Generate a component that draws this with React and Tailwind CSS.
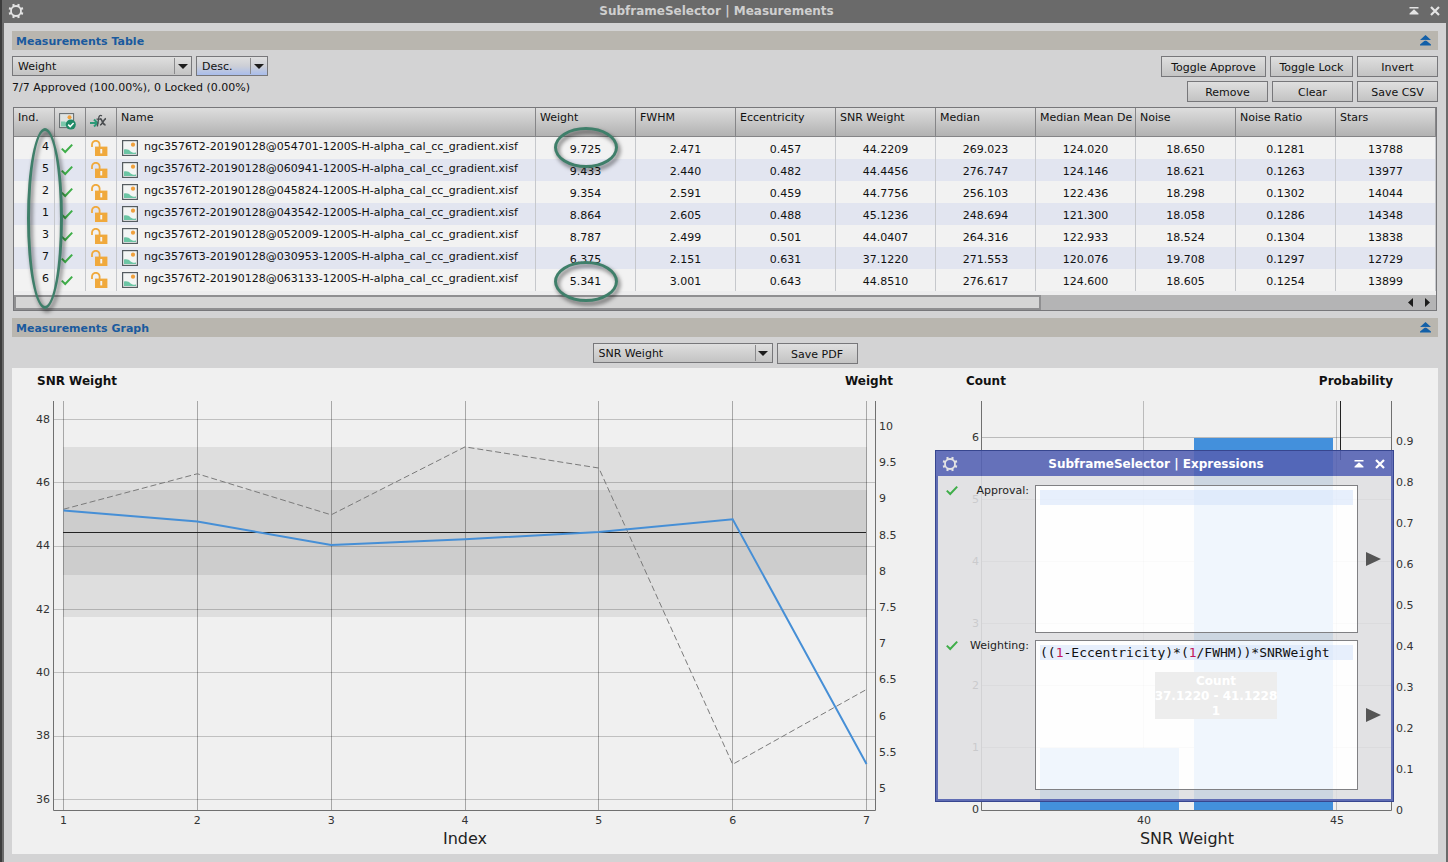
import React, { useState } from 'react';

const MEASUREMENTS = [
  { index: 4, file: 'ngc3576T2-20190128@054701-1200S-H-alpha_cal_cc_gradient.xisf', values: ['9.725', '2.471', '0.457', '44.2209', '269.023', '124.020', '18.650', '0.1281', '13788'] },
  { index: 5, file: 'ngc3576T2-20190128@060941-1200S-H-alpha_cal_cc_gradient.xisf', values: ['9.433', '2.440', '0.482', '44.4456', '276.747', '124.146', '18.621', '0.1263', '13977'] },
  { index: 2, file: 'ngc3576T2-20190128@045824-1200S-H-alpha_cal_cc_gradient.xisf', values: ['9.354', '2.591', '0.459', '44.7756', '256.103', '122.436', '18.298', '0.1302', '14044'] },
  { index: 1, file: 'ngc3576T2-20190128@043542-1200S-H-alpha_cal_cc_gradient.xisf', values: ['8.864', '2.605', '0.488', '45.1236', '248.694', '121.300', '18.058', '0.1286', '14348'] },
  { index: 3, file: 'ngc3576T2-20190128@052009-1200S-H-alpha_cal_cc_gradient.xisf', values: ['8.787', '2.499', '0.501', '44.0407', '264.316', '122.933', '18.524', '0.1304', '13838'] },
  { index: 7, file: 'ngc3576T3-20190128@030953-1200S-H-alpha_cal_cc_gradient.xisf', values: ['6.375', '2.151', '0.631', '37.1220', '271.553', '120.076', '19.708', '0.1297', '12729'] },
  { index: 6, file: 'ngc3576T2-20190128@063133-1200S-H-alpha_cal_cc_gradient.xisf', values: ['5.341', '3.001', '0.643', '44.8510', '276.617', '124.600', '18.605', '0.1254', '13899'] },
];

const VALUE_COLUMNS = [
  'Weight',
  'FWHM',
  'Eccentricity',
  'SNR Weight',
  'Median',
  'Median Mean De',
  'Noise',
  'Noise Ratio',
  'Stars',
];

const GearIcon = () => (
  <svg width="16" height="16" viewBox="0 0 16 16" fill="none" stroke="#e4e4e4" aria-hidden="true">
    <circle cx="8" cy="8" r="5" strokeWidth="1.8" />
    {[22.5, 67.5, 112.5, 157.5, 202.5, 247.5, 292.5, 337.5].map((angle) => (
      <path key={angle} d="M8 2.6V0.5" strokeWidth="2.2" transform={`rotate(${angle} 8 8)`} />
    ))}
  </svg>
);

const ShadeIcon = () => (
  <svg width="10" height="8" viewBox="0 0 10 8" fill="currentColor" aria-hidden="true">
    <path d="M0.5 0h9v1.6h-9zM5 2.2l4.5 4.2v1.2h-9V6.4z" />
  </svg>
);

const CloseIcon = () => (
  <svg width="10" height="10" viewBox="0 0 10 10" stroke="currentColor" strokeWidth="2.2" aria-hidden="true">
    <path d="M1 1l8 8M9 1L1 9" />
  </svg>
);

const CollapseIcon = () => (
  <svg width="11" height="11" viewBox="0 0 11 11" fill="#1360a8" aria-hidden="true">
    <path d="M5.5 0L11 5H0zM5.5 5L11 9.6V10.6H0V9.6z" />
    <path d="M1.5 5.4h8" stroke="#b9b6af" strokeWidth="0.7" />
  </svg>
);

const CheckIcon = () => (
  <svg width="12" height="11" viewBox="0 0 12 11" fill="none" stroke="#3fae49" strokeWidth="2" aria-hidden="true">
    <path d="M0.8 5.6l3.4 3.4L11.2 1.6" />
  </svg>
);

const UnlockIcon = () => (
  <svg width="17" height="17" viewBox="0 0 17 17" aria-hidden="true">
    <path d="M1 7V4.6a3.6 3.6 0 0 1 7.6 0V7" fill="none" stroke="#f0a93c" strokeWidth="1.8" />
    <path d="M4 6.6h12.4V16H4z" fill="#f0a93c" />
    <path d="M9.3 9h1.9v4.4H9.3z" fill="#f4f4f4" />
  </svg>
);

const ImageIcon = () => (
  <svg width="16" height="16" viewBox="0 0 16 16" aria-hidden="true">
    <rect x="0.6" y="0.6" width="14.8" height="14.8" fill="#f3f5f4" stroke="#555c60" strokeWidth="1.2" />
    <path d="M2 14V9.6c3-.8 5 .3 6.6 1.8 1.6 1.2 3.4 1.4 5.4 1.2V14z" fill="#6cc5a4" />
    <circle cx="11" cy="4.7" r="2.1" fill="#f0a03c" />
  </svg>
);

const ApprovedIcon = () => (
  <svg width="17" height="17" viewBox="0 0 17 17" aria-hidden="true">
    <rect x="0.6" y="0.6" width="14" height="14" fill="#dfe3e1" stroke="#62686b" strokeWidth="1" />
    <path d="M2 13.5V8.5h4l2 2v3z" fill="#7cc8ac" />
    <circle cx="10.5" cy="4.2" r="2" fill="#f0a03c" />
    <circle cx="11.8" cy="11.6" r="5" fill="#1f8a66" />
    <path d="M9.2 11.6l2 2 3.4-3.6" fill="none" stroke="#fff" strokeWidth="1.5" />
  </svg>
);

const FormulaIcon = () => (
  <svg width="17" height="15" viewBox="0 0 17 15" fill="none" aria-hidden="true">
    <path d="M0 9h7M4 5.5L7.5 9 4 12.5" stroke="#2c9a78" strokeWidth="2" />
    <path d="M12 1.8C9.8.8 9 2.2 8.7 4L7.4 12.5M6.500 5.2h4.6" stroke="#4a4d50" strokeWidth="1.3" />
    <path d="M10.2 4.6c2 0 2 6.4 5.4 6.4M16 4.6c-2.6.2-3.4 6.2-6 6.4" stroke="#4a4d50" strokeWidth="1.6" />
  </svg>
);

const PlayIcon = () => (
  <svg width="15" height="14" viewBox="0 0 15 14" fill="#555" aria-hidden="true">
    <path d="M0 0l15 7-15 7z" />
  </svg>
);

const SectionBar = ({ title }) => (
  <div className="flex h-[19px] items-center justify-between bg-[#b9b6af] pr-[7px] pl-1">
    <h2 className="pt-0.5 text-[11px] leading-4 font-bold text-[#1a5a9e]">{title}</h2>
    <button type="button" aria-label={`Collapse ${title}`}>
      <CollapseIcon />
    </button>
  </div>
);

const PushButton = ({ children, className }) => (
  <button
    type="button"
    className={`h-[21px] border border-[#77777a] bg-linear-to-b from-[#dfdfdf] to-[#c3c3c3] pt-0.5 text-center leading-4 ${className}`}
  >
    {children}
  </button>
);

const ComboBox = ({ label, options, className, selectClassName }) => {
  const [value, setValue] = useState(options[0]);
  return (
    <div className={`relative h-5 ${className}`}>
      <select
        aria-label={label}
        value={value}
        onChange={(event) => setValue(event.target.value)}
        className={`h-full w-full appearance-none border border-[#77777a] bg-linear-to-b from-[#dfdfdf] pt-0.5 pl-[5px] leading-4 ${selectClassName}`}
      >
        {options.map((option) => (
          <option key={option}>{option}</option>
        ))}
      </select>
      <span className="pointer-events-none absolute inset-y-0.5 right-0.5 flex w-4 items-center justify-center border-l border-[#8a8a8c]">
        <svg width="10" height="5" viewBox="0 0 10 5" fill="#1c1c1c" aria-hidden="true">
          <path d="M0 0h10L5 5z" />
        </svg>
      </span>
    </div>
  );
};

// Oval callout drawn over the table
const Ring = ({ className }) => (
  <div
    className={`pointer-events-none absolute rounded-[50%] border-[3px] border-[#3f7f6a] drop-shadow-[2px_3px_2px_rgba(0,0,0,0.6)] ${className}`}
  />
);

const headCell =
  'h-[29px] overflow-hidden border-r border-b border-[#858587] bg-linear-to-b from-[#dedede] to-[#b2b2b2] pt-[3px] pl-1 text-left align-top font-normal whitespace-nowrap leading-[14px]';
const bodyCell = 'h-[22px] border-r border-[#c6c8cc] p-0 leading-4 whitespace-nowrap';

const MeasurementsTable = () => (
  <div className="relative mx-px mt-[5px] border border-[#77777a] bg-[#ededee]">
    <table className="w-full table-fixed border-separate border-spacing-0">
      <colgroup>
        <col className="w-[41px]" />
        <col className="w-[31px]" />
        <col className="w-[31px]" />
        <col />
        {VALUE_COLUMNS.map((name) => (
          <col key={name} className="w-[100px]" />
        ))}
      </colgroup>
      <thead>
        <tr>
          <th className={headCell}>Ind.</th>
          <th className={headCell} aria-label="Approved">
            <div className="pt-0.5"><ApprovedIcon /></div>
          </th>
          <th className={headCell} aria-label="Locked">
            <div className="pt-[3px]"><FormulaIcon /></div>
          </th>
          <th className={headCell}>Name</th>
          {VALUE_COLUMNS.map((name) => (
            <th key={name} className={headCell}>{name}</th>
          ))}
        </tr>
      </thead>
      <tbody>
        {MEASUREMENTS.map((row) => (
          <tr key={row.index} className="bg-[#f2f2f2] even:bg-[#e2e5f0]">
            <td className={`${bodyCell} pr-[5px] pb-0.5 text-right`}>{row.index}</td>
            <td className={`${bodyCell} pl-1.5`}><CheckIcon /></td>
            <td className={`${bodyCell} pl-[5px]`}><UnlockIcon /></td>
            <td className={`${bodyCell} pl-[5px]`}>
              <div className="flex items-center gap-1.5">
                <ImageIcon />
                <span className="pb-0.5">{row.file}</span>
              </div>
            </td>
            {row.values.map((value, i) => (
              <td key={VALUE_COLUMNS[i]} className={`${bodyCell} pt-1 text-center`}>{value}</td>
            ))}
          </tr>
        ))}
      </tbody>
    </table>
    <div className="mt-1 flex h-[15px] items-center justify-between bg-[#b4b4b5] pr-1.5">
      <div className="h-full w-[72.5%] border-2 border-[#8f8f91] bg-[#d5d5d5]" />
      <div className="flex gap-3">
        <button type="button" aria-label="Scroll left">
          <svg width="5" height="9" viewBox="0 0 5 9" fill="#1c1c1c"><path d="M5 0v9L0 4.5z" /></svg>
        </button>
        <button type="button" aria-label="Scroll right">
          <svg width="5" height="9" viewBox="0 0 5 9" fill="#1c1c1c"><path d="M0 0v9l5-4.5z" /></svg>
        </button>
      </div>
    </div>
    <Ring className="top-5 left-[13px] h-[181px] w-9" />
    <Ring className="top-[19px] right-[818px] h-[41px] w-16" />
    <Ring className="top-[153px] right-[818px] h-[41px] w-16" />
  </div>
);

const GRID = '#000';
const byIndex = [...MEASUREMENTS].sort((a, b) => a.index - b.index);

const indexX = (i) => 51.5 + ((i - 1) * 803) / 6;
const snrY = (v) => 51.5 + ((48 - v) * 380) / 12;
const weightY = (v) => 59 + (10 - v) * 72.4;

const MeasurementsChart = () => {
  const snrLine = byIndex.map((m) => `${indexX(m.index)},${snrY(Number(m.values[3]))}`).join(' ');
  const weightLine = byIndex.map((m) => `${indexX(m.index)},${weightY(Number(m.values[0]))}`).join(' ');

  return (
    <svg viewBox="0 0 924 486" className="block w-full" role="img" aria-label="SNR Weight and Weight by index">
      <rect x="51" y="79" width="804" height="170" fill="#dedede" />
      <rect x="51" y="122" width="804" height="85" fill="#cdcdcd" />
      <g stroke={GRID} strokeOpacity="0.2">
        {[48, 46, 44, 42, 40, 38, 36].map((v) => (
          <path key={v} d={`M42 ${Math.floor(snrY(v)) + 0.5}H863`} />
        ))}
      </g>
      <g stroke={GRID} strokeOpacity="0.3">
        {byIndex.map(({ index }) => (
          <path key={index} d={`M${Math.floor(indexX(index)) + 0.5} 33V442`} />
        ))}
      </g>
      <path d="M41.5 33V442.5H863.5V33" fill="none" stroke="#707070" />
      <path d="M51 164.5H854" stroke="#222" />
      <polyline points={weightLine} fill="none" stroke="#7a7a7a" strokeDasharray="6 3" />
      <polyline points={snrLine} fill="none" stroke="#468fd6" strokeWidth="2" />
      <g fontSize="11" fill="#333">
        {[48, 46, 44, 42, 40, 38, 36].map((v) => (
          <text key={v} x="38" y={snrY(v) + 3} textAnchor="end">{v}</text>
        ))}
        {[10, 9.5, 9, 8.5, 8, 7.5, 7, 6.5, 6, 5.5, 5].map((v) => (
          <text key={v} x="867" y={weightY(v) + 3}>{v}</text>
        ))}
        {byIndex.map(({ index }) => (
          <text key={index} x={indexX(index)} y="456" textAnchor="middle">{index}</text>
        ))}
      </g>
      <g fontSize="12" fontWeight="bold" fill="#111">
        <text x="25" y="17">SNR Weight</text>
        <text x="881" y="17" textAnchor="end">Weight</text>
      </g>
      <text x="453" y="476" fontSize="16" fill="#222" textAnchor="middle">Index</text>
    </svg>
  );
};

const countY = (v) => 442 - v * 62;
const probabilityY = (v) => 442 - v * 410;

const HistogramChart = () => (
  <svg viewBox="0 0 502 486" className="block w-full" role="img" aria-label="SNR Weight histogram">
    <g stroke={GRID} strokeOpacity="0.22">
      {[1, 2, 3, 4, 5, 6].map((v) => (
        <path key={v} d={`M46 ${countY(v) - 0.5}H455`} />
      ))}
      <path d="M207.5 33V442M400.5 33V442" />
    </g>
    <rect x="104" y={countY(1)} width="139" height="62" fill="#4390dc" />
    <rect x="258" y={countY(6)} width="139" height="372" fill="#4390dc" />
    <path d="M404.5 33V92" stroke="#222" />
    <path d="M45.5 33V442.5H455.5V33" fill="none" stroke="#707070" />
    <rect x="219" y="304" width="122" height="47" fill="#1a1a1a" />
    <g fontSize="12" fontWeight="bold" fill="#fff" textAnchor="middle">
      <text x="280" y="317">Count</text>
      <text x="280" y="332">37.1220 - 41.1228</text>
      <text x="280" y="347">1</text>
    </g>
    <g fontSize="11" fill="#333">
      {[0, 1, 2, 3, 4, 5, 6].map((v) => (
        <text key={v} x="43" y={countY(v) + 3} textAnchor="end">{v}</text>
      ))}
      {[0, 0.1, 0.2, 0.3, 0.4, 0.5, 0.6, 0.7, 0.8, 0.9].map((v) => (
        <text key={v} x="460" y={probabilityY(v) + 4}>{v}</text>
      ))}
      <text x="208" y="456" textAnchor="middle">40</text>
      <text x="401" y="456" textAnchor="middle">45</text>
    </g>
    <g fontSize="12" fontWeight="bold" fill="#111">
      <text x="30" y="17">Count</text>
      <text x="457" y="17" textAnchor="end">Probability</text>
    </g>
    <text x="251" y="476" fontSize="16" fill="#222" textAnchor="middle">SNR Weight</text>
  </svg>
);

const NUMBER_TOKEN = /(\b\d+\b)/;

// The window is see-through, so each part tints the chart below it only once.
const panelTone = 'bg-[#dfdfe1]/88';

const ExpressionField = ({ id, label, initialValue, className }) => {
  const [value, setValue] = useState(initialValue);
  return (
    <div className={`flex ${className}`}>
      <div className={`flex w-[97px] items-start justify-between pr-1.5 pl-2 ${panelTone}`}>
        <CheckIcon />
        <label htmlFor={id} className="leading-3">{label}</label>
      </div>
      <div className="relative flex-1 border border-[#808083] bg-white/92">
        <div
          className="absolute inset-x-1 top-1 h-[15px] bg-[#cfe0fa]/50 font-['DejaVu_Sans_Mono',monospace] text-[13px] leading-4 whitespace-pre text-[#111]"
          aria-hidden="true"
        >
          {value.split(NUMBER_TOKEN).map((part, i) => (
            <span key={i} className={NUMBER_TOKEN.test(part) ? 'text-[#c2185b]' : ''}>{part}</span>
          ))}
        </div>
        <textarea
          id={id}
          value={value}
          spellCheck={false}
          onChange={(event) => setValue(event.target.value)}
          className="relative block h-full w-full resize-none bg-transparent px-1 py-1 font-['DejaVu_Sans_Mono',monospace] text-[13px] leading-4 text-transparent caret-black outline-none"
        />
      </div>
      <div className={`flex w-[33px] items-center pl-2 ${panelTone}`}>
        <button type="button" aria-label={`Insert into ${label}`}>
          <PlayIcon />
        </button>
      </div>
    </div>
  );
};

const ExpressionsWindow = () => (
  <section className="absolute top-[82px] right-11 flex w-[459px] flex-col border border-[#37468f]">
    <header className="flex h-[25px] items-center bg-[#5563b4]/90 pr-2 pl-1.5 text-white">
      <GearIcon />
      <h2 className="flex-1 text-center text-[12px] leading-4 font-bold">SubframeSelector | Expressions</h2>
      <div className="flex items-center gap-[11px]">
        <button type="button" aria-label="Shade window"><ShadeIcon /></button>
        <button type="button" aria-label="Close window"><CloseIcon /></button>
      </div>
    </header>
    <div className="border-2 border-t-0 border-[#606db4] text-[#222]">
      <div className={`h-[9px] ${panelTone}`} />
      <ExpressionField id="approval" label="Approval:" initialValue="" className="h-[148px]" />
      <div className={`h-[7px] ${panelTone}`} />
      <ExpressionField
        id="weighting"
        label="Weighting:"
        initialValue="((1-Eccentricity)*(1/FWHM))*SNRWeight"
        className="h-[150px]"
      />
      <div className={`h-[9px] ${panelTone}`} />
    </div>
  </section>
);

export default function App() {
  return (
    <div className="min-h-screen border-l-2 border-[#3c3c3c] bg-[#6a6a6a] pr-0.5 pl-0.5 font-['DejaVu_Sans',sans-serif] text-[11px] text-[#111]">
      <header className="flex h-[23px] items-center pr-1.5 pb-0.5 pl-1 text-[#e4e4e4]">
        <GearIcon />
        <h1 className="flex-1 text-center text-[12px] leading-4 font-bold text-[#cfcfcf]">
          SubframeSelector | Measurements
        </h1>
        <div className="flex items-center gap-[11px]">
          <button type="button" aria-label="Shade window"><ShadeIcon /></button>
          <button type="button" aria-label="Close window"><CloseIcon /></button>
        </div>
      </header>

      <main className="min-h-[calc(100vh-23px)] bg-[#d3d3d4] p-2">
        <SectionBar title="Measurements Table" />

        <div className="mt-1.5 flex items-start justify-between">
          <div>
            <div className="flex gap-1">
              <ComboBox
                label="Sort by"
                options={['Weight', 'FWHM', 'Eccentricity', 'SNR Weight']}
                className="w-[180px]"
                selectClassName="to-[#c3c3c3]"
              />
              <ComboBox
                label="Sort order"
                options={['Desc.', 'Asc.']}
                className="w-[72px]"
                selectClassName="via-[#cdcfd6] to-[#a9bdec]"
              />
            </div>
            <p className="mt-1 leading-4">7/7 Approved (100.00%), 0 Locked (0.00%)</p>
          </div>
          <div className="flex flex-col items-end gap-1">
            <div className="flex gap-1">
              <PushButton className="w-[105px]">Toggle Approve</PushButton>
              <PushButton className="w-[83px]">Toggle Lock</PushButton>
              <PushButton className="w-[81px]">Invert</PushButton>
            </div>
            <div className="flex gap-1">
              <PushButton className="w-[81px]">Remove</PushButton>
              <PushButton className="w-[81px]">Clear</PushButton>
              <PushButton className="w-[81px]">Save CSV</PushButton>
            </div>
          </div>
        </div>

        <MeasurementsTable />

        <div className="mt-[7px]">
          <SectionBar title="Measurements Graph" />
        </div>

        <div className="mt-1.5 flex justify-center gap-1">
          <ComboBox
            label="Graph property"
            options={['SNR Weight', 'Weight', 'FWHM']}
            className="w-[180px]"
            selectClassName="to-[#c3c3c3]"
          />
          <PushButton className="w-[81px]">Save PDF</PushButton>
        </div>

        <div className="relative mt-1 grid grid-cols-[924fr_502fr] bg-[#f0f0f0]">
          <MeasurementsChart />
          <HistogramChart />
          <ExpressionsWindow />
        </div>
      </main>
    </div>
  );
}
